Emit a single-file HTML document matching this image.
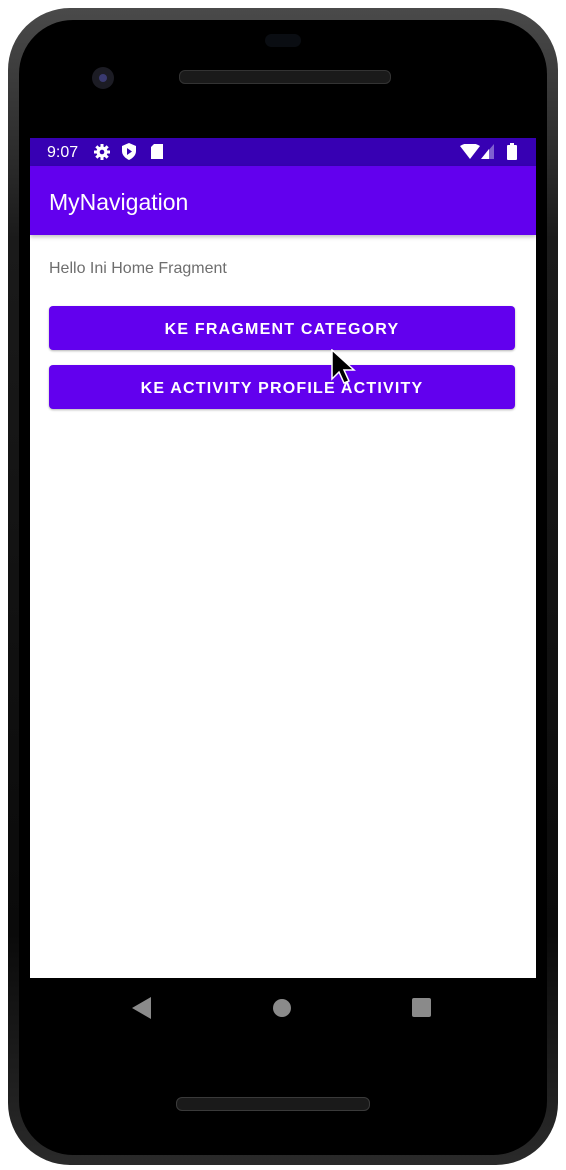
<!DOCTYPE html>
<html><head><meta charset="utf-8"><style>
html,body{margin:0;padding:0;background:#fff;width:566px;height:1170px;overflow:hidden;font-family:"Liberation Sans",sans-serif}
.phone{position:absolute;left:8px;top:8px;width:550px;height:1157px;border-radius:62px;background:linear-gradient(#4a4a4a,#1a1a1a 20%,#0a0a0a 80%,#2a2a2a);}
.inner{position:absolute;left:11px;top:12px;width:528px;height:1135px;border-radius:54px;background:#000}
.screen{position:absolute;left:30px;top:138px;width:506px;height:840px;background:#fff}
.status{height:28px;background:#3700b3;color:#fff;font-size:16px;position:relative}
.appbar{height:69px;background:#6200ee;color:#fff;font-size:23px;box-shadow:0 2px 4px rgba(0,0,0,.25);position:relative}
.btn{position:absolute;left:19px;width:466px;height:44px;background:#6200ee;border-radius:4px;color:#fff;font-size:16px;font-weight:bold;letter-spacing:1.2px;text-align:center;line-height:48px;box-shadow:0 1px 2px rgba(0,0,0,.3)}
</style></head><body>
<div class="phone"><div class="inner"></div></div>
<div style="position:absolute;left:265px;top:34px;width:36px;height:13px;border-radius:7px;background:#0a0d12"></div>
<div style="position:absolute;left:179px;top:70px;width:210px;height:12px;border-radius:6px;background:#1a1a1a;border:1px solid #333"></div>
<div style="position:absolute;left:92px;top:67px;width:22px;height:22px;border-radius:50%;background:#1c1c24"><div style="position:absolute;left:7px;top:7px;width:8px;height:8px;border-radius:50%;background:#3a3a70"></div></div>
<div style="position:absolute;left:176px;top:1097px;width:192px;height:12px;border-radius:6px;background:#1a1a1a;border:1px solid #3a3a3a"></div>
<div class="screen">
 <div class="status">
  <span style="position:absolute;left:17px;top:6px">9:07</span>
  <svg style="position:absolute;left:64px;top:6px" width="16" height="16" viewBox="0 0 16 16"><g fill="#fff"><circle cx="8" cy="8" r="5.5"/><rect x="6.5" y="0" width="3" height="16"/><rect x="0" y="6.5" width="16" height="3"/><rect x="6.5" y="0" width="3" height="16" transform="rotate(45 8 8)"/><rect x="6.5" y="0" width="3" height="16" transform="rotate(-45 8 8)"/></g><circle cx="8" cy="8" r="2.3" fill="#3700b3"/></svg>
  <svg style="position:absolute;left:92px;top:5px" width="14" height="17" viewBox="0 0 14 17"><path d="M7 0L14 3V8C14 12 11 15 7 17C3 15 0 12 0 8V3Z" fill="#fff"/><path d="M5 5L10 8.5L5 12Z" fill="#3700b3"/></svg>
  <svg style="position:absolute;left:121px;top:6px" width="12" height="15"><path d="M3 0H12V15H0V3Z" fill="#fff"/></svg>
  <svg style="position:absolute;left:430px;top:6px" width="20" height="15"><path d="M0 2Q10 -4 20 2L10 15Z" fill="#fff"/></svg>
  <svg style="position:absolute;left:451px;top:6px" width="13" height="15"><path d="M13 0V15H0Z" fill="#8060d0"/><path d="M8 5V15H0Z" fill="#fff"/></svg>
  <svg style="position:absolute;left:477px;top:5px" width="10" height="17"><rect x="0" y="2" width="10" height="15" rx="1" fill="#fff"/><rect x="3" y="0" width="4" height="3" fill="#fff"/></svg>
 </div>
 <div class="appbar"><span style="position:absolute;left:19px;top:23px">MyNavigation</span></div>
 <div style="position:absolute;left:19px;top:122px;font-size:16px;color:#6e6e6e">Hello Ini Home Fragment</div>
 <div class="btn" style="top:168px">KE FRAGMENT CATEGORY</div>
 <div class="btn" style="top:227px">KE ACTIVITY PROFILE ACTIVITY</div>
 <svg style="position:absolute;left:301px;top:211px" width="26" height="38" viewBox="0 0 26 38"><path d="M1 1V30L8 23L13 34L18 32L13 21H23Z" fill="#000" stroke="#fff" stroke-width="1.5"/></svg>
</div>
<svg style="position:absolute;left:131px;top:997px" width="20" height="22"><path d="M20 0V22L1 11Z" fill="#8a8a8a"/></svg>
<div style="position:absolute;left:273px;top:999px;width:18px;height:18px;border-radius:50%;background:#8a8a8a"></div>
<div style="position:absolute;left:412px;top:998px;width:19px;height:19px;border-radius:2px;background:#8a8a8a"></div>
</body></html>
